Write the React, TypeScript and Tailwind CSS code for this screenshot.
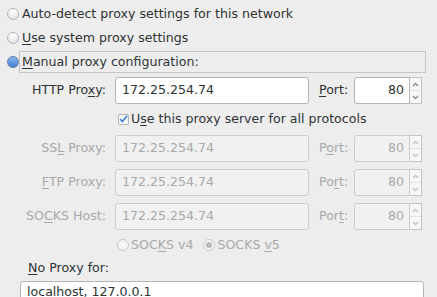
import React from 'react';

const font = { fontFamily: '"DejaVu Sans", "Liberation Sans", sans-serif' };

function Radio({ checked, disabled }: { checked?: boolean; disabled?: boolean }) {
  if (checked && !disabled) {
    return (
      <span className="w-[12px] h-[12px] rounded-full border border-[#5f7fa8] bg-gradient-to-b from-[#8fb8ec] to-[#3f7fd2] flex items-center justify-center shrink-0" />
    );
  }
  return (
    <span
      className={`w-[12px] h-[12px] rounded-full border flex items-center justify-center shrink-0 ${
        disabled ? 'border-[#c8c8c8] bg-[#f4f4f4]' : 'border-[#b4b4b4] bg-gradient-to-b from-[#ffffff] to-[#e4e4e4]'
      }`}
    >
      {checked && <span className="w-[6px] h-[6px] rounded-full bg-[#b8b8b8]" />}
    </span>
  );
}

function U({ children }: { children: React.ReactNode }) {
  return <span className="underline underline-offset-2">{children}</span>;
}

function Spinner({ disabled }: { disabled?: boolean }) {
  const c = disabled ? 'text-[#c4c4c4]' : 'text-[#8a8a8a]';
  return (
    <div className={`w-[12px] h-full flex flex-col border border-l-0 border-[#c4c4c4] bg-[#f7f7f7] ${c}`}>
      <div className="flex-1 flex items-center justify-center border-b border-[#e2e2e2]">
        <svg width="7" height="5" viewBox="0 0 7 5"><path d="M1 4 L3.5 1.5 L6 4" fill="none" stroke="currentColor" strokeWidth="1.3" /></svg>
      </div>
      <div className="flex-1 flex items-center justify-center">
        <svg width="7" height="5" viewBox="0 0 7 5"><path d="M1 1 L3.5 3.5 L6 1" fill="none" stroke="currentColor" strokeWidth="1.3" /></svg>
      </div>
    </div>
  );
}

function ProxyRow({
  label,
  port,
  disabled,
}: {
  label: React.ReactNode;
  port: React.ReactNode;
  disabled?: boolean;
}) {
  const txt = disabled ? 'text-[#a9a9a9]' : 'text-[#2e3436]';
  const box = disabled ? 'bg-[#f1f1f1] border-[#cdcdcd]' : 'bg-white border-[#b5b5b5]';
  return (
    <div className="flex items-center h-[27px]">
      <div className={`w-[106px] text-right whitespace-nowrap ${txt}`}>{label}</div>
      <div className={`ml-[9px] w-[194px] h-full rounded-[3px] border flex items-center pl-[6px] ${box} ${txt}`}>
        172.25.254.74
      </div>
      <div className={`ml-[10px] w-[35px] ${txt}`}>{port}</div>
      <div className="flex h-full">
        <div className={`w-[56px] h-full rounded-l-[3px] border flex items-center justify-end pr-[5px] ${box} ${txt}`}>
          80
        </div>
        <Spinner disabled={disabled} />
      </div>
    </div>
  );
}

export default function App() {
  return (
    <div className="w-[437px] h-[297px] overflow-hidden bg-[#ededed] text-[12.6px] text-[#2e3436]" style={font}>
      {/* Mode radios */}
      <div className="flex flex-col pt-[3px]">
        <div className="flex items-center gap-[3px] h-[22px] pl-[7px]">
          <Radio />
          <span>Auto-detect proxy settings for this network</span>
        </div>
        <div className="flex items-center gap-[3px] h-[22px] pl-[7px] mt-[2px]">
          <Radio />
          <span>
            <U>U</U>se system proxy settings
          </span>
        </div>
        <div className="flex items-center h-[22px] pl-[7px] mt-[2px]">
          <Radio checked />
          <span className="w-[407px] h-full flex items-center border border-[#c6c6c6] pl-[2px]">
            <U>M</U>anual proxy configuration:
          </span>
        </div>
      </div>

      {/* Manual settings */}
      <div className="flex flex-col mt-[4px]">
        <ProxyRow
          label={
            <>
              HTTP Pro<U>x</U>y:
            </>
          }
          port={
            <>
              <U>P</U>ort:
            </>
          }
        />
        <div className="flex items-center h-[14px] mt-[8px] pl-[118px] gap-[2px]">
          <span className="w-[11px] h-[11px] border border-[#b5b5b5] bg-[#f6f6f6] rounded-[2px] flex items-center justify-center">
            <svg width="11" height="10" viewBox="0 0 11 10">
              <path d="M1.5 5 L4 8 L10 1" fill="none" stroke="#3b7fd4" strokeWidth="2" />
            </svg>
          </span>
          <span>
            U<U>s</U>e this proxy server for all protocols
          </span>
        </div>
        <div className="flex flex-col gap-[7px] mt-[9px]">
          <ProxyRow
            disabled
            label={
              <>
                SS<U>L</U> Proxy:
              </>
            }
            port={
              <>
                P<U>o</U>rt:
              </>
            }
          />
          <ProxyRow
            disabled
            label={
              <>
                <U>F</U>TP Proxy:
              </>
            }
            port={
              <>
                Po<U>r</U>t:
              </>
            }
          />
          <ProxyRow
            disabled
            label={
              <>
                SO<U>C</U>KS Host:
              </>
            }
            port={
              <>
                Por<U>t</U>:
              </>
            }
          />
        </div>
        <div className="flex items-center h-[14px] mt-[8px] pl-[117px] text-[#a9a9a9]">
          <Radio disabled />
          <span className="ml-[2px]">
            SOC<U>K</U>S v4
          </span>
          <span className="ml-[10px]">
            <Radio checked disabled />
          </span>
          <span className="ml-[2px]">
            SOCKS <U>v</U>5
          </span>
        </div>
      </div>

      {/* No proxy */}
      <div className="pl-[28px] mt-[9px] h-[14px] flex items-center">
        <span>
          <U>N</U>o Proxy for:
        </span>
      </div>
      <div className="ml-[20px] mt-[6px] w-[404px] h-[27px] rounded-[3px] border border-[#b5b5b5] bg-white flex items-start pt-[3px] pl-[6px] leading-[13px]">
        localhost, 127.0.0.1
      </div>
    </div>
  );
}
